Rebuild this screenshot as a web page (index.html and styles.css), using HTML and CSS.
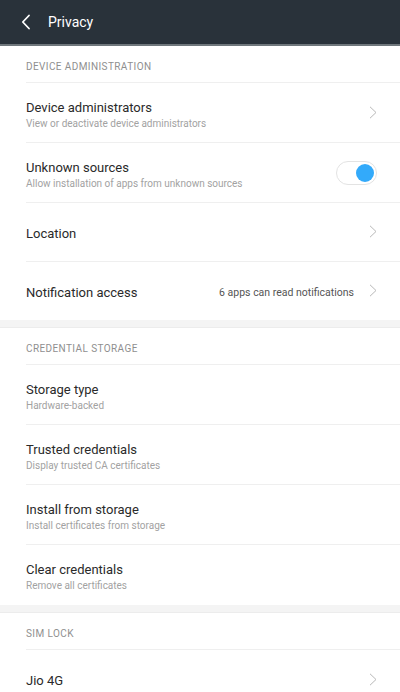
FILE: index.html
```html
<!DOCTYPE html>
<html lang="en">
<head>
<meta charset="utf-8">
<title>Privacy</title>
<link rel="stylesheet" href="styles.css">
</head>
<body>
<header class="appbar">
  <svg class="back" width="10" height="16" viewBox="0 0 10 16"><polyline points="8,1.5 1.8,8 8,14.5" fill="none" stroke="#ffffff" stroke-width="1.8" stroke-linecap="round" stroke-linejoin="round"/></svg>
  <span class="appbar-title">Privacy</span>
</header>

<main class="list">
  <div class="section-title"><span>DEVICE ADMINISTRATION</span></div>
  <div class="row two">
    <div class="row-inner">
      <div class="texts"><div class="title">Device administrators</div><div class="sub">View or deactivate device administrators</div></div>
      <svg class="chev" width="8" height="13" viewBox="0 0 8 13"><polyline points="1,0.8 7,6.5 1,12.2" fill="none" stroke="#b8b8b8" stroke-width="1"/></svg>
    </div>
  </div>
  <div class="row two">
    <div class="row-inner">
      <div class="texts"><div class="title">Unknown sources</div><div class="sub">Allow installation of apps from unknown sources</div></div>
      <div class="toggle"><div class="knob"></div></div>
    </div>
  </div>
  <div class="row one">
    <div class="row-inner">
      <div class="texts"><div class="title">Location</div></div>
      <svg class="chev" width="8" height="13" viewBox="0 0 8 13"><polyline points="1,0.8 7,6.5 1,12.2" fill="none" stroke="#b8b8b8" stroke-width="1"/></svg>
    </div>
  </div>
  <div class="row one last">
    <div class="row-inner">
      <div class="texts"><div class="title">Notification access</div></div>
      <span class="value">6 apps can read notifications</span>
      <svg class="chev" width="8" height="13" viewBox="0 0 8 13"><polyline points="1,0.8 7,6.5 1,12.2" fill="none" stroke="#b8b8b8" stroke-width="1"/></svg>
    </div>
  </div>

  <div class="gap"></div>

  <div class="section-title"><span>CREDENTIAL STORAGE</span></div>
  <div class="row two">
    <div class="row-inner">
      <div class="texts"><div class="title">Storage type</div><div class="sub">Hardware-backed</div></div>
    </div>
  </div>
  <div class="row two">
    <div class="row-inner">
      <div class="texts"><div class="title">Trusted credentials</div><div class="sub">Display trusted CA certificates</div></div>
    </div>
  </div>
  <div class="row two">
    <div class="row-inner">
      <div class="texts"><div class="title">Install from storage</div><div class="sub">Install certificates from storage</div></div>
    </div>
  </div>
  <div class="row two last">
    <div class="row-inner">
      <div class="texts"><div class="title">Clear credentials</div><div class="sub">Remove all certificates</div></div>
    </div>
  </div>

  <div class="gap"></div>

  <div class="section-title"><span>SIM LOCK</span></div>
  <div class="row one last">
    <div class="row-inner">
      <div class="texts"><div class="title">Jio 4G</div></div>
      <svg class="chev" width="8" height="13" viewBox="0 0 8 13"><polyline points="1,0.8 7,6.5 1,12.2" fill="none" stroke="#b8b8b8" stroke-width="1"/></svg>
    </div>
  </div>
</main>
</body>
</html>
```
FILE: styles.css
```css
* { box-sizing: border-box; }
html, body { margin: 0; padding: 0; }
body {
  width: 400px;
  height: 692px;
  overflow: hidden;
  background: #ffffff;
  font-family: Roboto, "Noto Sans", "Liberation Sans", sans-serif;
}
.appbar {
  height: 46px;
  background: #29323a;
  border-bottom: 2px solid #6f777c;
  display: flex;
  align-items: center;
  padding-left: 21px;
}
.back { display: block; }
.appbar-title {
  margin-left: 17px;
  color: #ffffff;
  font-size: 14px;
}
.list { display: flex; flex-direction: column; }
.section-title {
  height: 37px;
  margin-left: 26px;
  border-bottom: 1px solid #efefef;
  display: flex;
  align-items: center;
  padding-top: 4px;
  font-size: 10px;
  color: #8f8f8f;
  letter-spacing: 0.4px;
}
.row { margin-left: 26px; }
.row-inner {
  display: flex;
  align-items: center;
  padding-right: 23px;
  border-bottom: 1px solid #efefef;
  height: 100%;
}
.row.two { height: 60px; }
.row.one { height: 58.5px; }
.row.last .row-inner { border-bottom: none; }
.texts { flex: 1; display: flex; flex-direction: column; padding-top: 4px; }
.title {
  font-size: 13px;
  color: #2a2a2a;
  line-height: 16px;
}
.sub {
  font-size: 10px;
  color: #a2a2a2;
  line-height: 13px;
  margin-top: 1px;
}
.value {
  font-size: 10.5px;
  color: #555555;
  margin-right: 15px;
  padding-top: 4px;
}
.chev { display: block; }
.toggle {
  width: 41px;
  height: 24px;
  border: 1px solid #e3e3e3;
  border-radius: 12px;
  background: #ffffff;
  display: flex;
  align-items: center;
  justify-content: flex-end;
  padding-right: 2px;
}
.knob {
  width: 18px;
  height: 18px;
  border-radius: 50%;
  background: #33aafa;
}
.gap {
  height: 8px;
  background: #f4f4f4;
  border-bottom: 1px solid #ececec;
}
```
